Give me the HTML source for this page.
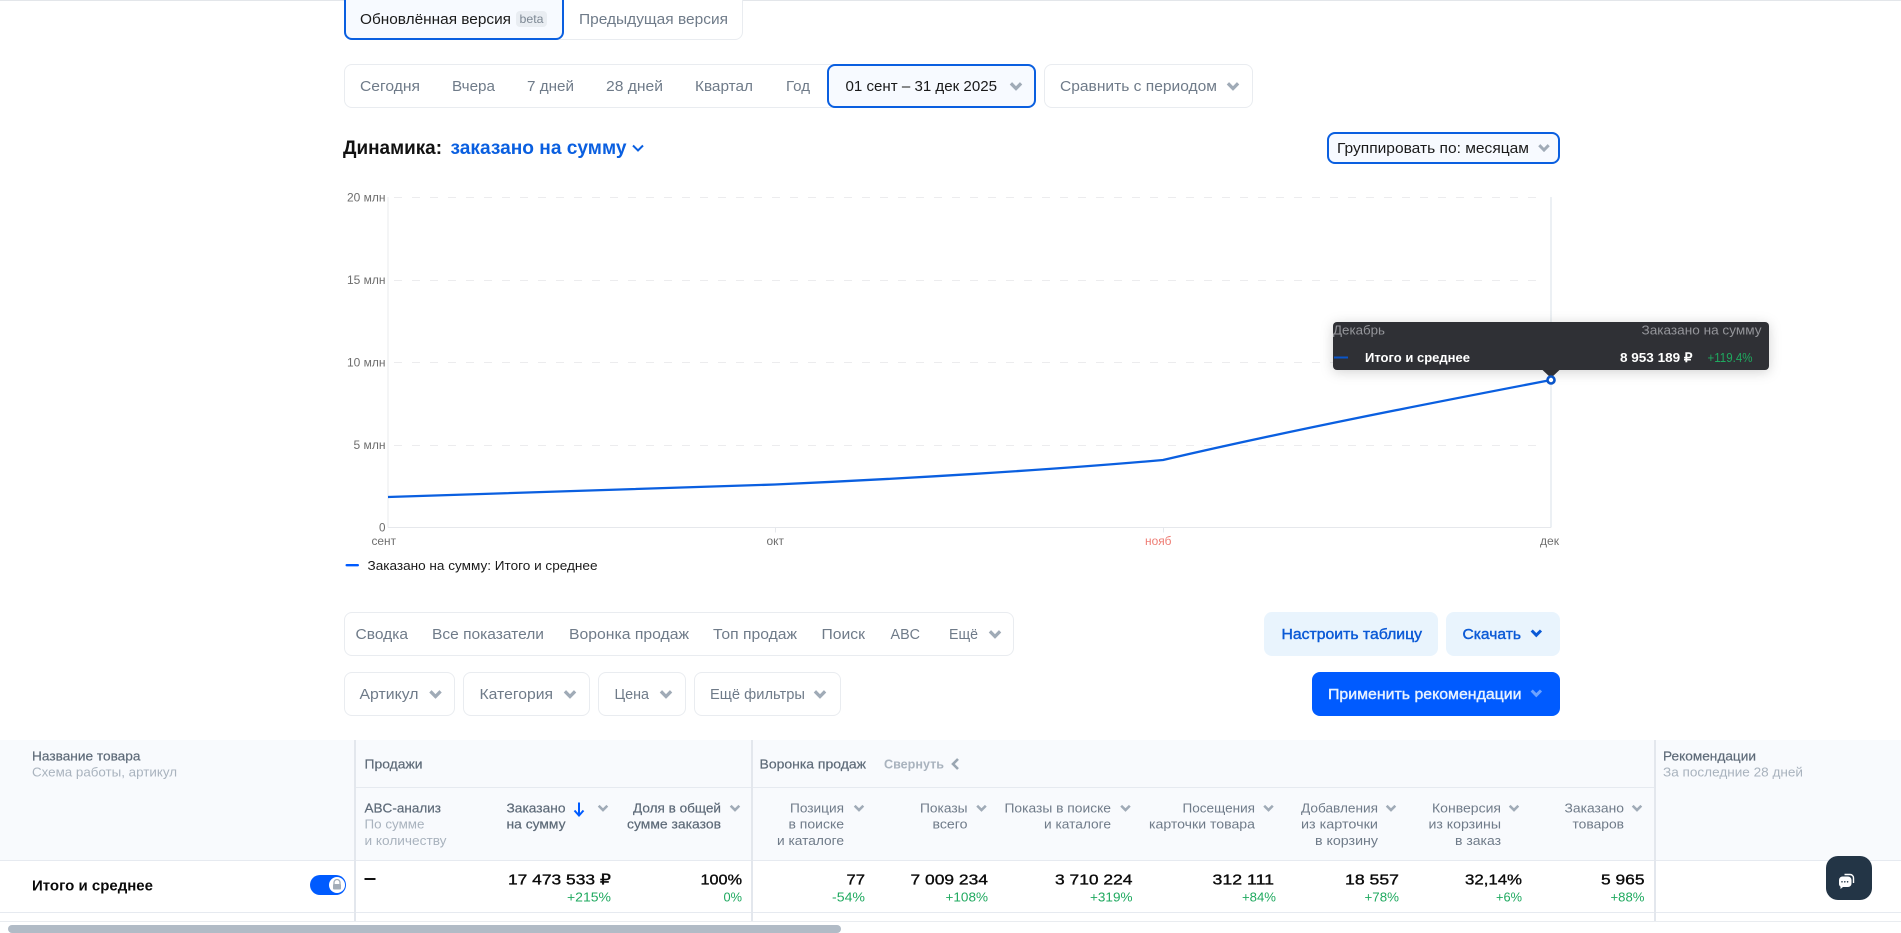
<!DOCTYPE html>
<html lang="ru"><head><meta charset="utf-8"><title>Динамика</title>
<style>
html,body{margin:0;padding:0;width:1901px;height:933px;overflow:hidden;background:#fff}
body{position:relative;font-family:"Liberation Sans",sans-serif}
.b{position:absolute;box-sizing:border-box;border:1px solid #e9ecf0;border-radius:8px;background:#fff}
.a{border:2px solid #0a5fe0;background:#f7faff}
svg{position:absolute;left:0;top:0}
text{font-family:"Liberation Sans",sans-serif}
.g{font-size:15px;fill:#6f7b89}
.k{font-size:15px;fill:#1a1a1a}
.s{font-size:12px;fill:#6e6e6e}
.h{font-size:13px;fill:#6f7b89}
.l{font-size:13px;fill:#a9b3be}
.m{font-size:13px;fill:#5d6a78;stroke:#5d6a78;stroke-width:.2}
.v{font-size:15px;fill:#0a0a0a;stroke:#0a0a0a;stroke-width:.35}
.p{font-size:13px;fill:#1fa95f}
.w{font-size:13px;fill:#fff;font-weight:bold}
.bl{font-size:15px;fill:#0b5ad6;stroke:#0b5ad6;stroke-width:.4}
</style></head><body>
<div style="position:absolute;left:0;top:0;width:1901px;height:1px;background:#e3e6ea"></div>
<div class="b" style="left:344px;top:-10px;width:399px;height:50px"></div>
<div class="b a" style="left:344px;top:-10px;width:220px;height:50px"></div>
<div style="position:absolute;left:516px;top:11px;width:31px;height:16px;border-radius:4px;background:#e9edf2"></div>
<div class="b" style="left:344px;top:64px;width:500px;height:44px"></div>
<div class="b a" style="left:827px;top:64px;width:209px;height:44px"></div>
<div class="b" style="left:1044px;top:64px;width:209px;height:44px"></div>
<div class="b a" style="left:1327px;top:132px;width:233px;height:32px"></div>
<div class="b" style="left:344px;top:612px;width:670px;height:44px"></div>
<div class="b" style="left:344px;top:672px;width:111px;height:44px"></div>
<div class="b" style="left:463px;top:672px;width:127px;height:44px"></div>
<div class="b" style="left:598px;top:672px;width:88px;height:44px"></div>
<div class="b" style="left:694px;top:672px;width:147px;height:44px"></div>
<div style="position:absolute;left:1264px;top:612px;width:174px;height:44px;border-radius:8px;background:#e9f4fd"></div>
<div style="position:absolute;left:1446px;top:612px;width:114px;height:44px;border-radius:8px;background:#e9f4fd"></div>
<div style="position:absolute;left:1312px;top:672px;width:248px;height:44px;border-radius:8px;background:#005bff"></div>
<div style="position:absolute;left:0;top:740px;width:1901px;height:120px;background:#f8fafd"></div>
<div style="position:absolute;left:0;top:860px;width:1901px;height:1px;background:#e6eaf0"></div>
<div style="position:absolute;left:0;top:912px;width:1901px;height:1px;background:#e6eaf0"></div>
<div style="position:absolute;left:0;top:921px;width:1901px;height:1px;background:#e9ecf0"></div>
<div style="position:absolute;left:355px;top:787px;width:1301px;height:1px;background:#e6eaf0"></div>
<div style="position:absolute;left:354px;top:740px;width:2px;height:181px;background:#e3e7ed"></div>
<div style="position:absolute;left:751px;top:740px;width:2px;height:181px;background:#e3e7ed"></div>
<div style="position:absolute;left:1654px;top:740px;width:2px;height:181px;background:#e3e7ed"></div>
<div style="position:absolute;left:8px;top:925px;width:833px;height:8px;border-radius:4px;background:#b1bbc6"></div>
<div style="position:absolute;left:310px;top:875px;width:36px;height:20px;border-radius:10px;background:#005bff"></div>
<div style="position:absolute;left:329px;top:877px;width:16px;height:16px;border-radius:8px;background:#fff"></div>
<div style="position:absolute;left:1826px;top:856px;width:46px;height:44px;border-radius:12px;background:#233546"></div>

<svg width="1901" height="933" viewBox="0 0 1901 933" xmlns="http://www.w3.org/2000/svg">
<defs>
<symbol id="c" viewBox="0 0 12 8"><path d="M1.3 1.2 6 6 10.700 1.200" fill="none" stroke="#a0abb7" stroke-width="3"/></symbol>
<symbol id="d" viewBox="0 0 12 8"><path d="M1.300 1.300 6 6 10.700 1.300" fill="none" stroke="#a0abb7" stroke-width="2.800"/></symbol>
</defs>

<text class="k" x="360" y="24" textLength="151" lengthAdjust="spacingAndGlyphs">Обновлённая версия</text>
<text x="519.500" y="23" font-size="12" fill="#7d8894" textLength="24" lengthAdjust="spacingAndGlyphs">beta</text>
<text class="g" x="579" y="24" textLength="149" lengthAdjust="spacingAndGlyphs">Предыдущая версия</text>

<text class="g" x="360" y="91" textLength="60" lengthAdjust="spacingAndGlyphs">Сегодня</text>
<text class="g" x="452" y="91" textLength="43" lengthAdjust="spacingAndGlyphs">Вчера</text>
<text class="g" x="527" y="91" textLength="47" lengthAdjust="spacingAndGlyphs">7 дней</text>
<text class="g" x="606" y="91" textLength="57" lengthAdjust="spacingAndGlyphs">28 дней</text>
<text class="g" x="695" y="91" textLength="58" lengthAdjust="spacingAndGlyphs">Квартал</text>
<text class="g" x="786" y="91" textLength="24" lengthAdjust="spacingAndGlyphs">Год</text>
<text class="k" x="845.500" y="91" textLength="151.500" lengthAdjust="spacingAndGlyphs">01 сент – 31 дек 2025</text>
<use href="#c" x="1009.500" y="82" width="13" height="8.700"/>
<text class="g" x="1060" y="91" textLength="157" lengthAdjust="spacingAndGlyphs">Сравнить с периодом</text>
<use href="#c" x="1226.500" y="82" width="13" height="8.700"/>

<text x="343" y="154" font-size="19" font-weight="bold" fill="#111" textLength="99" lengthAdjust="spacingAndGlyphs">Динамика:</text>
<text x="450.500" y="154" font-size="19" font-weight="bold" fill="#0a5fe0" textLength="176" lengthAdjust="spacingAndGlyphs">заказано на сумму</text>
<path d="M633 145.500 638 150.500 643 145.500" fill="none" stroke="#0a5fe0" stroke-width="2"/>
<text class="k" x="1337" y="153" textLength="192" lengthAdjust="spacingAndGlyphs">Группировать по: месяцам</text>
<use href="#c" x="1538" y="144" width="12" height="8"/>

<g stroke="#ececee" stroke-width="1" stroke-dasharray="8 10">
<path d="M394 197.500H1546M394 280.500H1546M394 362.500H1546M394 445.500H1546"/>
</g>
<path d="M388 197V527.500" stroke="#e9ebee"/>
<path d="M1551 197V527.500" stroke="#e6ebf0" stroke-width="1.500"/>
<path d="M388 527.500H1551" stroke="#e6e8ec"/>
<path d="M775.500 527.500v5M1163.500 527.500v5" stroke="#e6e8ec"/>
<path d="M388 497 L775 484.500 C900 479 1050 470 1163 460 C1292 430 1421 405 1551 380" fill="none" stroke="#0a5fe0" stroke-width="2.300"/>
<text class="s" x="347" y="201.500" textLength="38.500" lengthAdjust="spacingAndGlyphs">20 млн</text>
<text class="s" x="347" y="284" textLength="38.500" lengthAdjust="spacingAndGlyphs">15 млн</text>
<text class="s" x="347" y="366.500" textLength="38.500" lengthAdjust="spacingAndGlyphs">10 млн</text>
<text class="s" x="353.500" y="449" textLength="32" lengthAdjust="spacingAndGlyphs">5 млн</text>
<text class="s" x="379" y="531.500" textLength="6.500" lengthAdjust="spacingAndGlyphs">0</text>
<text class="s" x="371.500" y="545" textLength="24.500" lengthAdjust="spacingAndGlyphs">сент</text>
<text class="s" x="766.500" y="545" textLength="17.500" lengthAdjust="spacingAndGlyphs">окт</text>
<text x="1145" y="545" font-size="12" fill="#ee7d74" textLength="26.500" lengthAdjust="spacingAndGlyphs">нояб</text>
<text class="s" x="1540" y="545" textLength="19" lengthAdjust="spacingAndGlyphs">дек</text>
<rect x="345.500" y="564" width="13.500" height="2.400" rx="1.200" fill="#005bff"/>
<text x="367.500" y="570" font-size="13" fill="#1b1b1b" textLength="230" lengthAdjust="spacingAndGlyphs">Заказано на сумму: Итого и среднее</text>

<rect x="1333" y="322" width="436" height="48" rx="4" fill="#2f3035" style="filter:drop-shadow(0 2px 6px rgba(0,0,0,.18))"/>
<path d="M1542 369.500 1551 378 1560 369.500Z" fill="#2f3035"/>
<circle cx="1551" cy="380" r="3.500" fill="#fff" stroke="#0a55c9" stroke-width="2.600"/>
<text x="1333" y="334.500" font-size="13" fill="#94959a" textLength="52" lengthAdjust="spacingAndGlyphs">Декабрь</text>
<text x="1641.500" y="334.500" font-size="13" fill="#94959a" textLength="120" lengthAdjust="spacingAndGlyphs">Заказано на сумму</text>
<rect x="1334" y="356.500" width="14" height="2" fill="#0a55c9"/>
<text class="w" x="1365" y="362" textLength="105" lengthAdjust="spacingAndGlyphs">Итого и среднее</text>
<text class="w" x="1620" y="362" textLength="72.500" lengthAdjust="spacingAndGlyphs">8 953 189 ₽</text>
<text x="1707.500" y="362" font-size="13" fill="#1fa95f" textLength="45" lengthAdjust="spacingAndGlyphs">+119.4%</text>

<text class="g" x="355.500" y="639" textLength="52.500" lengthAdjust="spacingAndGlyphs">Сводка</text>
<text class="g" x="432" y="639" textLength="112" lengthAdjust="spacingAndGlyphs">Все показатели</text>
<text class="g" x="569" y="639" textLength="120" lengthAdjust="spacingAndGlyphs">Воронка продаж</text>
<text class="g" x="713" y="639" textLength="84" lengthAdjust="spacingAndGlyphs">Топ продаж</text>
<text class="g" x="821.500" y="639" textLength="43.500" lengthAdjust="spacingAndGlyphs">Поиск</text>
<text class="g" x="890.500" y="639" textLength="29.500" lengthAdjust="spacingAndGlyphs">ABC</text>
<text class="g" x="949" y="639" textLength="29" lengthAdjust="spacingAndGlyphs">Ещё</text>
<use href="#c" x="988.500" y="630" width="13" height="8.700"/>
<text class="g" x="359.500" y="699" textLength="59" lengthAdjust="spacingAndGlyphs">Артикул</text>
<use href="#c" x="429" y="690" width="13" height="8.700"/>
<text class="g" x="479.500" y="699" textLength="73.500" lengthAdjust="spacingAndGlyphs">Категория</text>
<use href="#c" x="563.500" y="690" width="13" height="8.700"/>
<text class="g" x="614.500" y="699" textLength="34.500" lengthAdjust="spacingAndGlyphs">Цена</text>
<use href="#c" x="659.500" y="690" width="13" height="8.700"/>
<text class="g" x="710" y="699" textLength="95" lengthAdjust="spacingAndGlyphs">Ещё фильтры</text>
<use href="#c" x="813.500" y="690" width="13" height="8.700"/>

<text class="bl" x="1281.500" y="639" textLength="140.500" lengthAdjust="spacingAndGlyphs">Настроить таблицу</text>
<text class="bl" x="1462.500" y="639" textLength="58.500" lengthAdjust="spacingAndGlyphs">Скачать</text>
<path d="M1531.700 630.500 1536.300 635.200 1541 630.500" fill="none" stroke="#0b5ad6" stroke-width="3"/>
<text x="1328" y="699" font-size="15" fill="#e8f2ff" stroke="#e8f2ff" stroke-width=".4" textLength="193.500" lengthAdjust="spacingAndGlyphs">Применить рекомендации</text>
<path d="M1531.700 690.500 1536.300 695.200 1541 690.500" fill="none" stroke="#6ea3ff" stroke-width="3"/>

<text class="m" x="32" y="760.500" textLength="108.500" lengthAdjust="spacingAndGlyphs">Название товара</text>
<text class="l" x="32" y="776.500" textLength="145" lengthAdjust="spacingAndGlyphs">Схема работы, артикул</text>
<text class="m" x="364.500" y="768.500" textLength="58" lengthAdjust="spacingAndGlyphs">Продажи</text>
<text class="m" x="364.500" y="812.500" textLength="76.500" lengthAdjust="spacingAndGlyphs">ABC-анализ</text>
<text class="l" x="364.500" y="828.500" textLength="60" lengthAdjust="spacingAndGlyphs">По сумме</text>
<text class="l" x="364.500" y="845" textLength="82" lengthAdjust="spacingAndGlyphs">и количеству</text>
<text class="m" x="506.500" y="812.500" textLength="59" lengthAdjust="spacingAndGlyphs">Заказано</text>
<text class="m" x="506.500" y="828.500" textLength="59" lengthAdjust="spacingAndGlyphs">на сумму</text>
<path d="M579 802.500V815M574.500 810.500 579 815.500 583.500 810.500" fill="none" stroke="#005bff" stroke-width="2"/>
<use href="#d" x="597.500" y="804.500" width="11" height="7.400"/>
<text class="m" x="633" y="812.500" textLength="88" lengthAdjust="spacingAndGlyphs">Доля в общей</text>
<text class="m" x="627" y="828.500" textLength="94" lengthAdjust="spacingAndGlyphs">сумме заказов</text>
<use href="#d" x="729.500" y="804.500" width="11" height="7.400"/>

<text class="m" x="759.500" y="768.500" textLength="106.500" lengthAdjust="spacingAndGlyphs">Воронка продаж</text>
<text class="l" x="884" y="768.500" font-weight="bold" textLength="60" lengthAdjust="spacingAndGlyphs">Свернуть</text>
<path d="M958 759 953 764 958 769" fill="none" stroke="#9aa6b2" stroke-width="2.600"/>
<text class="h" x="790" y="812.500" textLength="54" lengthAdjust="spacingAndGlyphs">Позиция</text>
<text class="h" x="788.500" y="828.500" textLength="55.500" lengthAdjust="spacingAndGlyphs">в поиске</text>
<text class="h" x="777" y="845" textLength="67" lengthAdjust="spacingAndGlyphs">и каталоге</text>
<use href="#d" x="853.500" y="804.500" width="11" height="7.400"/>
<text class="h" x="920" y="812.500" textLength="47.500" lengthAdjust="spacingAndGlyphs">Показы</text>
<text class="h" x="932.500" y="828.500" textLength="35" lengthAdjust="spacingAndGlyphs">всего</text>
<use href="#d" x="976" y="804.500" width="11" height="7.400"/>
<text class="h" x="1004.500" y="812.500" textLength="106.500" lengthAdjust="spacingAndGlyphs">Показы в поиске</text>
<text class="h" x="1044" y="828.500" textLength="67" lengthAdjust="spacingAndGlyphs">и каталоге</text>
<use href="#d" x="1120" y="804.500" width="11" height="7.400"/>
<text class="h" x="1182.500" y="812.500" textLength="72.500" lengthAdjust="spacingAndGlyphs">Посещения</text>
<text class="h" x="1149" y="828.500" textLength="106" lengthAdjust="spacingAndGlyphs">карточки товара</text>
<use href="#d" x="1263" y="804.500" width="11" height="7.400"/>
<text class="h" x="1301" y="812.500" textLength="77" lengthAdjust="spacingAndGlyphs">Добавления</text>
<text class="h" x="1301" y="828.500" textLength="77" lengthAdjust="spacingAndGlyphs">из карточки</text>
<text class="h" x="1315" y="845" textLength="63" lengthAdjust="spacingAndGlyphs">в корзину</text>
<use href="#d" x="1385.500" y="804.500" width="11" height="7.400"/>
<text class="h" x="1432" y="812.500" textLength="69" lengthAdjust="spacingAndGlyphs">Конверсия</text>
<text class="h" x="1428.500" y="828.500" textLength="72.500" lengthAdjust="spacingAndGlyphs">из корзины</text>
<text class="h" x="1455" y="845" textLength="46" lengthAdjust="spacingAndGlyphs">в заказ</text>
<use href="#d" x="1508.500" y="804.500" width="11" height="7.400"/>
<text class="h" x="1564.500" y="812.500" textLength="59.500" lengthAdjust="spacingAndGlyphs">Заказано</text>
<text class="h" x="1572.500" y="828.500" textLength="51.500" lengthAdjust="spacingAndGlyphs">товаров</text>
<use href="#d" x="1631.500" y="804.500" width="11" height="7.400"/>
<text class="m" x="1663" y="760.500" textLength="93" lengthAdjust="spacingAndGlyphs">Рекомендации</text>
<text class="l" x="1663" y="776.500" textLength="140" lengthAdjust="spacingAndGlyphs">За последние 28 дней</text>

<text x="32" y="890.500" font-size="15" font-weight="bold" fill="#0a0a0a" textLength="121" lengthAdjust="spacingAndGlyphs">Итого и среднее</text>
<rect x="364.500" y="878" width="11" height="2" fill="#111"/>
<text class="v" x="508" y="884.500" textLength="103" lengthAdjust="spacingAndGlyphs">17 473 533 ₽</text>
<text class="p" x="567" y="901.500" textLength="44" lengthAdjust="spacingAndGlyphs">+215%</text>
<text class="v" x="700.500" y="884.500" textLength="41.500" lengthAdjust="spacingAndGlyphs">100%</text>
<text class="p" x="723.500" y="901.500" textLength="18.500" lengthAdjust="spacingAndGlyphs">0%</text>
<text class="v" x="846.500" y="884.500" textLength="18.500" lengthAdjust="spacingAndGlyphs">77</text>
<text class="p" x="832" y="901.500" textLength="33" lengthAdjust="spacingAndGlyphs">-54%</text>
<text class="v" x="910.500" y="884.500" textLength="77.500" lengthAdjust="spacingAndGlyphs">7 009 234</text>
<text class="p" x="945.500" y="901.500" textLength="42.500" lengthAdjust="spacingAndGlyphs">+108%</text>
<text class="v" x="1055" y="884.500" textLength="77.500" lengthAdjust="spacingAndGlyphs">3 710 224</text>
<text class="p" x="1090" y="901.500" textLength="42.500" lengthAdjust="spacingAndGlyphs">+319%</text>
<text class="v" x="1212.500" y="884.500" textLength="61.500" lengthAdjust="spacingAndGlyphs">312 111</text>
<text class="p" x="1242" y="901.500" textLength="34" lengthAdjust="spacingAndGlyphs">+84%</text>
<text class="v" x="1345" y="884.500" textLength="54" lengthAdjust="spacingAndGlyphs">18 557</text>
<text class="p" x="1364.500" y="901.500" textLength="34.500" lengthAdjust="spacingAndGlyphs">+78%</text>
<text class="v" x="1465" y="884.500" textLength="57" lengthAdjust="spacingAndGlyphs">32,14%</text>
<text class="p" x="1496" y="901.500" textLength="26" lengthAdjust="spacingAndGlyphs">+6%</text>
<text class="v" x="1601" y="884.500" textLength="43.500" lengthAdjust="spacingAndGlyphs">5 965</text>
<text class="p" x="1610.500" y="901.500" textLength="34" lengthAdjust="spacingAndGlyphs">+88%</text>

<path d="M334 884.500v-2a3 3 0 0 1 6 0v2" fill="none" stroke="#a3adb8" stroke-width="1.300"/>
<rect x="333" y="884" width="8" height="5.500" rx="1" fill="#a3adb8"/>

<path d="M1844.500 874.500h5.500a3.500 3.500 0 0 1 3.500 3.500v5" fill="none" stroke="#fff" stroke-width="1.400"/>
<path d="M1843.500 876.500h4.500a3.500 3.500 0 0 1 3.500 3.500v3.500a3.500 3.500 0 0 1-3.500 3.500h-5l-2.500 2v-2.400a3.300 3.300 0 0 1-1.500-2.900v-3.700a3.500 3.500 0 0 1 4-3.500z" fill="#fff"/>
<circle cx="1842" cy="881.800" r=".8" fill="#233546"/><circle cx="1844.800" cy="881.800" r=".8" fill="#233546"/><circle cx="1847.600" cy="881.800" r=".8" fill="#233546"/>
</svg>
</body></html>
